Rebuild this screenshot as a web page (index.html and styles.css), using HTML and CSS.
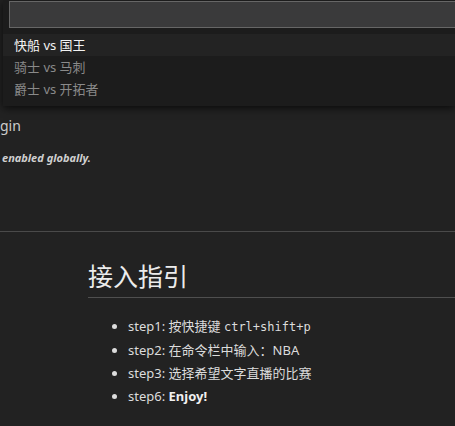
FILE: index.html
```html
<!DOCTYPE html>
<html>
<head>
<meta charset="utf-8">
<link rel="stylesheet" href="styles.css">
</head>
<body>
<div class="page">
  <div class="settings">
    <div class="setting-name">gin</div>
    <div class="setting-note">enabled globally.</div>
  </div>
  <hr class="rule">
  <div class="readme">
    <h1 class="title">接入指引</h1>
    <ul class="steps">
      <li>step1: 按快捷键 <code>ctrl+shift+p</code></li>
      <li>step2: 在命令栏中输入：NBA</li>
      <li>step3: 选择希望文字直播的比赛</li>
      <li>step6: <strong>Enjoy!</strong></li>
    </ul>
  </div>
</div>
<div class="quickpick">
  <div class="qp-input-wrap"><div class="qp-input"></div></div>
  <div class="qp-list">
    <div class="qp-item selected">快船 vs 国王</div>
    <div class="qp-item">骑士 vs 马刺</div>
    <div class="qp-item">爵士 vs 开拓者</div>
  </div>
</div>
</body>
</html>
```
FILE: styles.css
```css
html, body {
  margin: 0;
  padding: 0;
  background: #222222;
  height: 100%;
  overflow: hidden;
}
body {
  font-family: "Noto Sans", "Noto Sans CJK SC", sans-serif;
  color: #d4d4d4;
}
.page {
  padding-top: 116px;
}
.setting-name {
  font-size: 14px;
  line-height: 20px;
  color: #cccccc;
}
.setting-note {
  margin-top: 14px;
  font-size: 11px;
  line-height: 16px;
  font-weight: bold;
  font-style: italic;
  color: #d0d0d0;
  padding-left: 2px;
}
.rule {
  margin: 65px 0 0 0;
  border: 0;
  border-top: 1px solid #4a4a4a;
  height: 0;
}
.readme {
  margin-left: 88px;
}
.title {
  margin: 27px 0 0 0;
  font-size: 25px;
  line-height: 32px;
  font-weight: normal;
  color: #ececec;
  padding-bottom: 6px;
  border-bottom: 1px solid #4f4f4f;
  font-family: "Noto Sans CJK SC", sans-serif;
}
.steps {
  margin: 17px 0 0 0;
  padding-left: 40px;
  font-size: 13px;
  line-height: 23px;
  color: #dcdcdc;
}
.steps code {
  font-family: "DejaVu Sans Mono", "Liberation Mono", monospace;
  font-size: 12px;
}
.steps strong {
  color: #f0f0f0;
}
.quickpick {
  position: absolute;
  top: 0;
  left: 3px;
  right: 0;
  height: 106px;
  background: #1c1c1c;
  box-shadow: 0 2px 8px rgba(0, 0, 0, 0.7);
  font-size: 13px;
}
.qp-input-wrap {
  padding: 1px 0 0 6px;
}
.qp-input {
  height: 25px;
  background: #3a3a3b;
  border: 1px solid #666666;
  border-right: 0;
}
.qp-list {
  margin-top: 6px;
}
.qp-item {
  height: 22px;
  line-height: 22px;
  padding-left: 11px;
  color: #8a8a8a;
}
.qp-item.selected {
  background: #232323;
  color: #f2f2f2;
}
```
